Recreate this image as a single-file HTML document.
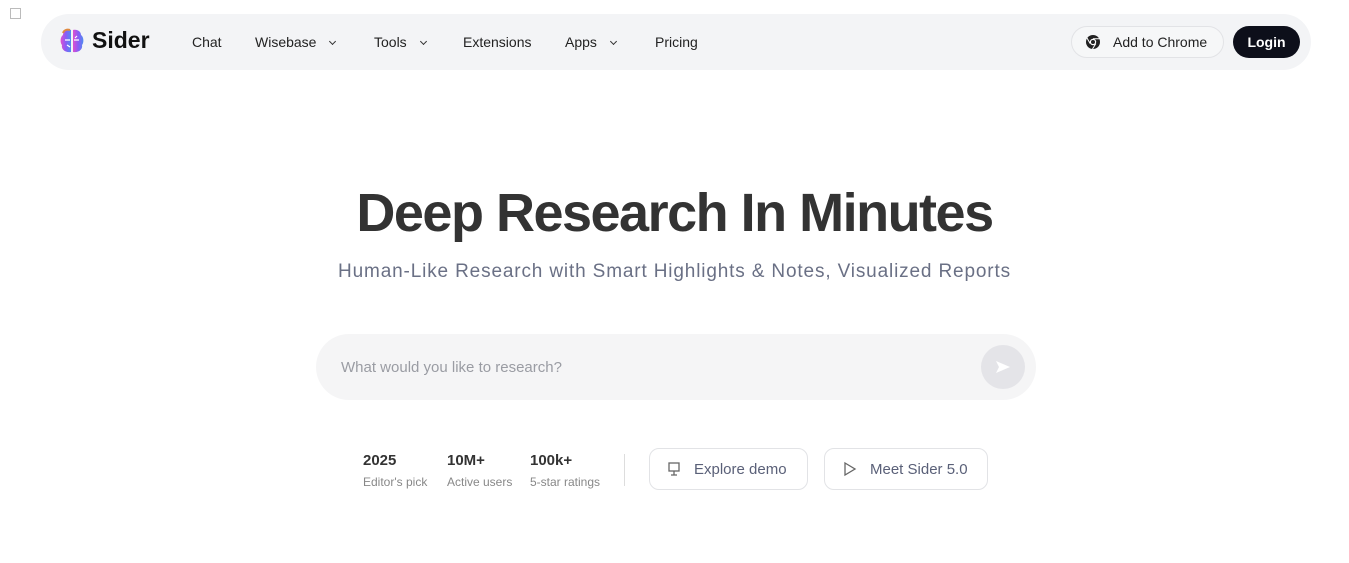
<!DOCTYPE html>
<html><head><meta charset="utf-8"><style>
*{box-sizing:border-box;margin:0;padding:0}
body{width:1349px;height:563px;background:#fff;font-family:"Liberation Sans",sans-serif;position:relative;overflow:hidden;color:#1a1a1a}
.nav{position:absolute;left:41px;top:14px;width:1270px;height:56px;background:#f3f4f6;border-radius:28px}
.abs{position:absolute}
.nl{position:absolute;top:20px;font-size:14px;color:#222}
.chev{display:inline-block;width:5px;height:5px;border-right:1.3px solid #333;border-bottom:1.3px solid #333;transform:rotate(45deg);margin-left:14px;position:relative;top:-3px}
</style></head><body>
<div class="abs" style="left:10px;top:8px;width:11px;height:11px;border:1px solid #bbb"></div>
<div class="nav">
 <svg class="abs" style="left:17px;top:13px" width="28" height="28" viewBox="0 0 28 28"><defs><linearGradient id="g" x1="0" x2="1"><stop offset="0" stop-color="#e04fd0"/><stop offset=".5" stop-color="#8a5cf6"/><stop offset="1" stop-color="#4f8cf0"/></linearGradient></defs><path d="M13 3C8 2 5 5 5 8 2 10 2 16 4 18 3 22 7 26 13 25Z" fill="url(#g)"/><path d="M15 3C20 2 23 5 23 8 26 10 26 16 24 18 25 22 21 26 15 25Z" fill="url(#g)"/><path d="M5 6C6 3 9 2 12 3" stroke="#e08a40" stroke-width="2" fill="none"/><path d="M7 13h5M16 13h5M9 18l3 2M19 9l-2 2" stroke="#fff" stroke-width="1.2"/></svg>
 <div class="abs" style="left:51px;top:13px;font-size:23px;font-weight:bold;color:#111">Sider</div>
 <div class="nl" style="left:151px">Chat</div>
 <div class="nl" style="left:214px">Wisebase<span class="chev"></span></div>
 <div class="nl" style="left:333px">Tools<span class="chev"></span></div>
 <div class="nl" style="left:422px">Extensions</div>
 <div class="nl" style="left:524px">Apps<span class="chev"></span></div>
 <div class="nl" style="left:614px">Pricing</div>
 <div class="abs" style="left:1030px;top:12px;width:153px;height:32px;border:1px solid #e2e3e6;border-radius:16px;background:#f6f7f8"></div>
 <svg class="abs" style="left:1044px;top:20px" width="16" height="16" viewBox="0 0 16 16"><circle cx="8" cy="8" r="7" fill="#222"/><circle cx="8" cy="8" r="3.2" fill="#fff"/><circle cx="8" cy="8" r="2" fill="#222"/><path d="M8 4.8H14.5M5.2 9.6L2 4M10.8 9.6L7.5 15" stroke="#fff" stroke-width="1"/></svg>
 <div class="nl" style="left:1072px;top:20px;font-size:14px">Add to Chrome</div>
 <div class="abs" style="left:1192px;top:12px;width:67px;height:32px;border-radius:16px;background:#0d0f1a;color:#fff;font-size:14px;text-align:center;line-height:32px;font-weight:bold">Login</div>
</div>
<div class="abs" style="left:0;width:1349px;top:182px;text-align:center;font-size:54px;font-weight:bold;color:#333;letter-spacing:-1.5px">Deep Research In Minutes</div>
<div class="abs" style="left:0;width:1349px;top:261px;text-align:center;font-size:19px;color:#6a7085;letter-spacing:0.85px">Human-Like Research with Smart Highlights &amp; Notes, Visualized Reports</div>
<div class="abs" style="left:316px;top:334px;width:720px;height:66px;border-radius:33px;background:#f5f5f6"></div>
<div class="abs" style="left:341px;top:359px;font-size:15px;color:#9a9ca3">What would you like to research?</div>
<div class="abs" style="left:981px;top:345px;width:44px;height:44px;border-radius:22px;background:#e4e4e8"></div>
<svg class="abs" style="left:994px;top:359px" width="18" height="16" viewBox="0 0 18 16"><path d="M2 2L16 8 2 14 5 8Z" fill="#fff"/></svg>
<div class="abs" style="left:363px;top:452px;font-size:15px;font-weight:bold;color:#333">2025</div>
<div class="abs" style="left:363px;top:475px;font-size:12px;color:#888">Editor's pick</div>
<div class="abs" style="left:447px;top:452px;font-size:15px;font-weight:bold;color:#333">10M+</div>
<div class="abs" style="left:447px;top:475px;font-size:12px;color:#888">Active users</div>
<div class="abs" style="left:530px;top:452px;font-size:15px;font-weight:bold;color:#333">100k+</div>
<div class="abs" style="left:530px;top:475px;font-size:12px;color:#888">5-star ratings</div>
<div class="abs" style="left:624px;top:454px;width:1px;height:32px;background:#ddd"></div>
<div class="abs" style="left:649px;top:448px;width:159px;height:42px;border:1px solid #e2e3e6;border-radius:10px"></div>
<svg class="abs" style="left:667px;top:461px" width="14" height="16" viewBox="0 0 14 16" fill="none" stroke="#666" stroke-width="1.3"><rect x="2" y="2" width="10" height="8"/><path d="M7 10v4M4 14h6"/></svg>
<div class="abs" style="left:694px;top:461px;font-size:15px;color:#5a6078">Explore demo</div>
<div class="abs" style="left:824px;top:448px;width:164px;height:42px;border:1px solid #e2e3e6;border-radius:10px"></div>
<svg class="abs" style="left:843px;top:461px" width="14" height="16" viewBox="0 0 14 16" fill="none" stroke="#666" stroke-width="1.3"><path d="M2 2L12 8 2 14Z"/></svg>
<div class="abs" style="left:870px;top:461px;font-size:15px;color:#5a6078">Meet Sider 5.0</div>
</body></html>
